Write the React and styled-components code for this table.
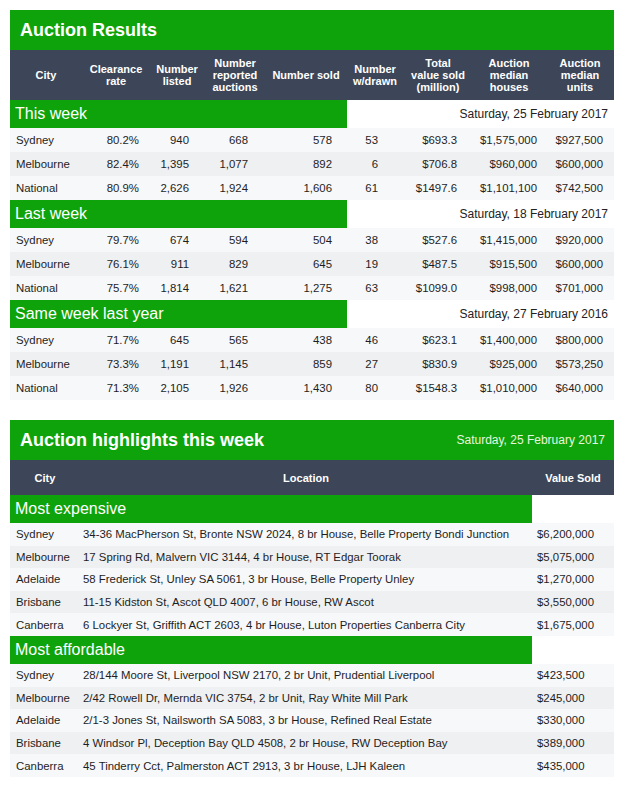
import React from 'react'
import styled, { createGlobalStyle } from 'styled-components'

const GlobalStyle = createGlobalStyle`
  body {
    margin: 0;
    background: #fff;
    font-family: "Liberation Sans", Arial, sans-serif;
  }
`

const GREEN = '#0fa30b'
const DARK = '#3d4659'

const Page = styled.div`
  padding: 10px 18px 10px 10px;
  display: flex;
  flex-direction: column;
  gap: 20px;
`

const Table = styled.div`
  width: 604px;
  display: flex;
  flex-direction: column;
`

const TitleBar = styled.div`
  height: 40px;
  background: ${GREEN};
  display: flex;
  align-items: center;
  justify-content: space-between;
  padding: 0 9px 0 10px;
`

const Title = styled.div`
  color: #fff;
  font-size: 18px;
  font-weight: bold;
`

const TitleDate = styled.div`
  color: #e6f7de;
  font-size: 12px;
`

const HeadRow = styled.div`
  display: grid;
  grid-template-columns: ${p => p.cols};
  height: ${p => p.h}px;
  background: ${DARK};
  color: #fff;
  font-size: 11px;
  font-weight: bold;
  line-height: 12px;
`

const HeadCell = styled.div`
  display: flex;
  align-items: center;
  justify-content: center;
  text-align: center;
  padding: 0 ${p => p.hp || 4}px;
`

const SectionRow = styled.div`
  display: flex;
  align-items: center;
  height: ${p => p.h}px;
`

const SectionLabel = styled.div`
  width: ${p => p.w}px;
  height: 100%;
  background: ${GREEN};
  color: #fff;
  font-size: 16px;
  display: flex;
  align-items: center;
  padding-left: 5px;
  box-sizing: border-box;
`

const SectionDate = styled.div`
  flex: 1;
  text-align: right;
  padding-right: 6px;
  font-size: 12px;
  color: #222;
`

const Row = styled.div`
  display: grid;
  grid-template-columns: ${p => p.cols};
  height: ${p => p.h}px;
  align-items: center;
  background: ${p => (p.alt ? '#eff0f2' : '#f7f8fa')};
  font-size: 11.4px;
  color: #1e1e1e;
`

const Cell = styled.div`
  text-align: ${p => p.align || 'right'};
  padding-right: ${p => p.pr || 0}px;
  padding-left: ${p => p.pl || 0}px;
  white-space: nowrap;
`

const resultCols = [
  { label: 'City', w: 72 },
  { label: 'Clearance rate', w: 68, pr: 11 },
  { label: 'Number listed', w: 54, pr: 15 },
  { label: 'Number reported auctions', w: 62, pr: 18 },
  { label: 'Number sold', w: 80, pr: 14 },
  { label: 'Number w/drawn', w: 58, pr: 26 },
  { label: 'Total value sold (million)', w: 68, pr: 15, hp: 7 },
  { label: 'Auction median houses', w: 74, pr: 9 },
  { label: 'Auction median units', w: 68, pr: 11 },
]
const resultGrid = resultCols.map(c => c.w + 'px').join(' ')

const results = [
  {
    name: 'This week',
    date: 'Saturday, 25 February 2017',
    rows: [
      ['Sydney', '80.2%', '940', '668', '578', '53', '$693.3', '$1,575,000', '$927,500'],
      ['Melbourne', '82.4%', '1,395', '1,077', '892', '6', '$706.8', '$960,000', '$600,000'],
      ['National', '80.9%', '2,626', '1,924', '1,606', '61', '$1497.6', '$1,101,100', '$742,500'],
    ],
  },
  {
    name: 'Last week',
    date: 'Saturday, 18 February 2017',
    rows: [
      ['Sydney', '79.7%', '674', '594', '504', '38', '$527.6', '$1,415,000', '$920,000'],
      ['Melbourne', '76.1%', '911', '829', '645', '19', '$487.5', '$915,500', '$600,000'],
      ['National', '75.7%', '1,814', '1,621', '1,275', '63', '$1099.0', '$998,000', '$701,000'],
    ],
  },
  {
    name: 'Same week last year',
    date: 'Saturday, 27 February 2016',
    rows: [
      ['Sydney', '71.7%', '645', '565', '438', '46', '$623.1', '$1,400,000', '$800,000'],
      ['Melbourne', '73.3%', '1,191', '1,145', '859', '27', '$830.9', '$925,000', '$573,250'],
      ['National', '71.3%', '2,105', '1,926', '1,430', '80', '$1548.3', '$1,010,000', '$640,000'],
    ],
  },
]

const highlightGrid = '70px 452px 82px'

const highlights = [
  {
    name: 'Most expensive',
    rows: [
      ['Sydney', '34-36 MacPherson St, Bronte NSW 2024, 8 br House, Belle Property Bondi Junction', '$6,200,000'],
      ['Melbourne', '17 Spring Rd, Malvern VIC 3144, 4 br House, RT Edgar Toorak', '$5,075,000'],
      ['Adelaide', '58 Frederick St, Unley SA 5061, 3 br House, Belle Property Unley', '$1,270,000'],
      ['Brisbane', '11-15 Kidston St, Ascot QLD 4007, 6 br House, RW Ascot', '$3,550,000'],
      ['Canberra', '6 Lockyer St, Griffith ACT 2603, 4 br House, Luton Properties Canberra City', '$1,675,000'],
    ],
  },
  {
    name: 'Most affordable',
    rows: [
      ['Sydney', '28/144 Moore St, Liverpool NSW 2170, 2 br Unit, Prudential Liverpool', '$423,500'],
      ['Melbourne', '2/42 Rowell Dr, Mernda VIC 3754, 2 br Unit, Ray White Mill Park', '$245,000'],
      ['Adelaide', '2/1-3 Jones St, Nailsworth SA 5083, 3 br House, Refined Real Estate', '$330,000'],
      ['Brisbane', '4 Windsor Pl, Deception Bay QLD 4508, 2 br House, RW Deception Bay', '$389,000'],
      ['Canberra', '45 Tinderry Cct, Palmerston ACT 2913, 3 br House, LJH Kaleen', '$435,000'],
    ],
  },
]

function ResultsTable() {
  return (
    <Table>
      <TitleBar>
        <Title>Auction Results</Title>
      </TitleBar>
      <HeadRow cols={resultGrid} h={50}>
        {resultCols.map(c => (
          <HeadCell key={c.label} hp={c.hp}>{c.label}</HeadCell>
        ))}
      </HeadRow>
      {results.map(section => (
        <React.Fragment key={section.name}>
          <SectionRow h={28}>
            <SectionLabel w={337}>{section.name}</SectionLabel>
            <SectionDate>{section.date}</SectionDate>
          </SectionRow>
          {section.rows.map((row, i) => (
            <Row key={row[0]} cols={resultGrid} h={24} alt={i === 1}>
              {row.map((v, j) =>
                j === 0 ? (
                  <Cell key={j} align="left" pl={6}>{v}</Cell>
                ) : (
                  <Cell key={j} pr={resultCols[j].pr}>{v}</Cell>
                )
              )}
            </Row>
          ))}
        </React.Fragment>
      ))}
    </Table>
  )
}

function HighlightsTable() {
  return (
    <Table>
      <TitleBar>
        <Title>Auction highlights this week</Title>
        <TitleDate>Saturday, 25 February 2017</TitleDate>
      </TitleBar>
      <HeadRow cols={highlightGrid} h={35}>
        <HeadCell>City</HeadCell>
        <HeadCell>Location</HeadCell>
        <HeadCell>Value Sold</HeadCell>
      </HeadRow>
      {highlights.map(section => (
        <React.Fragment key={section.name}>
          <SectionRow h={28}>
            <SectionLabel w={522}>{section.name}</SectionLabel>
          </SectionRow>
          {section.rows.map((row, i) => (
            <Row key={row[0]} cols={highlightGrid} h={22.6} alt={i % 2 === 1}>
              <Cell align="left" pl={6}>{row[0]}</Cell>
              <Cell align="left" pl={3}>{row[1]}</Cell>
              <Cell align="left" pl={5}>{row[2]}</Cell>
            </Row>
          ))}
        </React.Fragment>
      ))}
    </Table>
  )
}

export default function App() {
  return (
    <>
      <GlobalStyle />
      <Page>
        <ResultsTable />
        <HighlightsTable />
      </Page>
    </>
  )
}
